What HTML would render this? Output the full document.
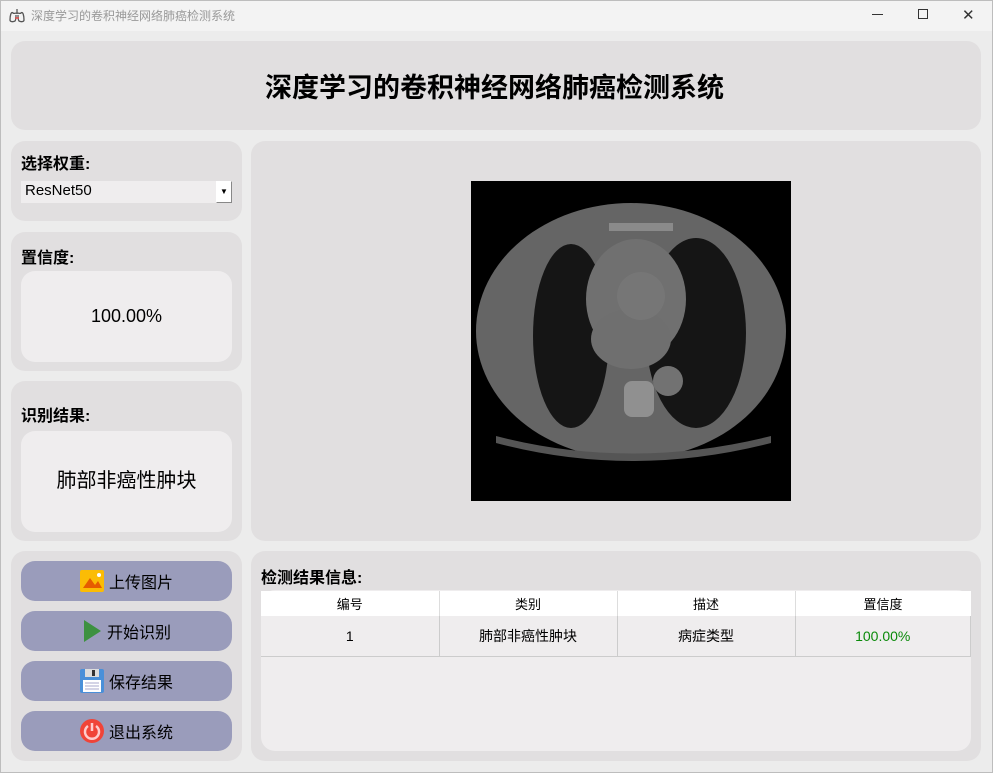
<!DOCTYPE html>
<html><head><meta charset="utf-8"><style>
*{margin:0;padding:0;box-sizing:border-box}
body{width:993px;height:773px;background:#ececec;font-family:"Liberation Sans","Noto Sans CJK SC",sans-serif;position:relative;overflow:hidden}
.abs{position:absolute}
.tb{left:0;top:0;width:993px;height:31px;background:#f3f3f3}
.tt{left:31px;top:7px;font-size:12px;color:#999}
.p{background:#e1dfe0;border-radius:14px}
.in{background:#efedee;border-radius:14px}
.lab{font-size:16px;font-weight:bold;color:#000}
.btn{left:21px;width:211px;height:40px;background:#9a9cbb;border-radius:14px;font-size:16px;color:#000;display:flex;align-items:center;justify-content:center;gap:5px}
table{border-collapse:collapse;font-size:13px}
td{text-align:center}
</style></head><body>
<div class="abs" style="left:0;top:0;width:993px;height:773px;border:1px solid #bdbdbd;z-index:9;pointer-events:none"></div>
<div class="abs tb"></div>
<svg class="abs" style="left:9px;top:8px" width="16" height="15" viewBox="0 0 16 15"><path d="M8 1v5M8 5c-2 0-3 1-4 0C2 3 1 8 1 12c0 2 3 2 5 1c1-1 1-4 1-6M8 5c2 0 3 1 4 0c2-2 3 3 3 7c0 2-3 2-5 1c-1-1-1-4-1-6" fill="none" stroke="#555" stroke-width="1.3"/><path d="M6 10h4" stroke="#e44" stroke-width="1.3"/></svg>
<div class="abs tt">深度学习的卷积神经网络肺癌检测系统</div>
<div class="abs" style="left:872px;top:14px;width:11px;height:1px;background:#333"></div>
<div class="abs" style="left:918px;top:9px;width:10px;height:10px;border:1px solid #333"></div>
<div class="abs" style="left:962px;top:6px;font-size:15px;color:#333">✕</div>

<div class="abs p" style="left:11px;top:41px;width:970px;height:89px"></div>
<div class="abs" style="left:-2px;top:66px;width:993px;text-align:center;font-size:27px;font-weight:bold">深度学习的卷积神经网络肺癌检测系统</div>

<div class="abs p" style="left:11px;top:141px;width:231px;height:80px"></div>
<div class="abs lab" style="left:21px;top:150px">选择权重:</div>
<div class="abs" style="left:21px;top:181px;width:211px;height:22px;background:#efedee;font-size:15px;padding:1px 0 0 4px">ResNet50</div>
<div class="abs" style="left:216px;top:181px;width:16px;height:22px;background:#fff;border:1px solid #888;border-top-color:#fff;border-left-color:#fff;font-size:8px;text-align:center;line-height:20px">▼</div>

<div class="abs p" style="left:11px;top:232px;width:231px;height:139px"></div>
<div class="abs lab" style="left:21px;top:244px">置信度:</div>
<div class="abs in" style="left:21px;top:271px;width:211px;height:91px;font-size:18px;text-align:center;line-height:91px">100.00%</div>

<div class="abs p" style="left:11px;top:381px;width:231px;height:160px"></div>
<div class="abs lab" style="left:21px;top:402px">识别结果:</div>
<div class="abs in" style="left:21px;top:431px;width:211px;height:101px;font-size:20px;text-align:center;line-height:101px">肺部非癌性肿块</div>

<div class="abs p" style="left:11px;top:551px;width:231px;height:210px"></div>
<div class="abs btn" style="top:561px"><svg width="24" height="22" viewBox="0 0 24 22"><rect width="24" height="22" rx="2" fill="#fbbc05"/><path d="M3 18L10 8l5 7 3-4 4 7z" fill="#e65c00"/><circle cx="19" cy="5" r="2" fill="#fff"/></svg>上传图片</div>
<div class="abs btn" style="top:611px"><svg width="20" height="24" viewBox="0 0 20 24"><path d="M2 1L19 12 2 23z" fill="#3d9140"/></svg>开始识别</div>
<div class="abs btn" style="top:661px"><svg width="24" height="24" viewBox="0 0 24 24"><rect width="24" height="24" rx="2" fill="#4a90d9"/><rect x="5" y="0" width="14" height="8" fill="#ddd"/><rect x="12" y="1" width="3" height="6" fill="#333"/><rect x="3" y="11" width="18" height="12" fill="#fff"/><path d="M5 14h14M5 17h14M5 20h14" stroke="#aac" stroke-width="1"/></svg>保存结果</div>
<div class="abs btn" style="top:711px"><svg width="24" height="24" viewBox="0 0 24 24"><circle cx="12" cy="12" r="12" fill="#f04438"/><path d="M8 7a7 7 0 1 0 8 0" fill="none" stroke="#fcc" stroke-width="2.5"/><path d="M12 4v8" stroke="#fcc" stroke-width="2.5"/></svg>退出系统</div>

<div class="abs p" style="left:251px;top:141px;width:730px;height:400px"></div>
<svg class="abs" style="left:471px;top:181px" width="320" height="320" viewBox="0 0 320 320">
<rect width="320" height="320" fill="#000"/>
<ellipse cx="160" cy="150" rx="155" ry="128" fill="#656565"/>
<path d="M25 255 Q160 290 300 255 L300 262 Q160 298 25 262z" fill="#555"/>
<ellipse cx="100" cy="155" rx="38" ry="92" fill="#151515"/>
<ellipse cx="225" cy="152" rx="50" ry="95" fill="#151515"/>
<ellipse cx="165" cy="118" rx="50" ry="60" fill="#707070"/>
<ellipse cx="160" cy="158" rx="40" ry="30" fill="#6f6f6f"/>
<circle cx="170" cy="115" r="24" fill="#767676"/>
<circle cx="197" cy="200" r="15" fill="#727272"/>
<rect x="153" y="200" width="30" height="36" rx="8" fill="#909090"/>
<path d="M138 42h64v8h-64z" fill="#8a8a8a"/>
</svg>

<div class="abs p" style="left:251px;top:551px;width:730px;height:210px"></div>
<div class="abs lab" style="left:261px;top:564px">检测结果信息:</div>
<div class="abs in" style="left:261px;top:590px;width:710px;height:161px"></div>
<table class="abs" style="left:261px;top:591px;width:710px">
<tr style="background:#fff;height:25px"><td style="width:178px;border-right:1px solid #ddd">编号</td><td style="width:178px;border-right:1px solid #ddd">类别</td><td style="width:178px;border-right:1px solid #ddd">描述</td><td>置信度</td></tr>
<tr style="height:40px;font-size:14px;border-bottom:1px solid #ccc"><td style="border-right:1px solid #ccc">1</td><td style="border-right:1px solid #ccc">肺部非癌性肿块</td><td style="border-right:1px solid #ccc">病症类型</td><td style="color:#0a8a0a;border-right:1px solid #ccc">100.00%</td></tr>
</table>
</body></html>
